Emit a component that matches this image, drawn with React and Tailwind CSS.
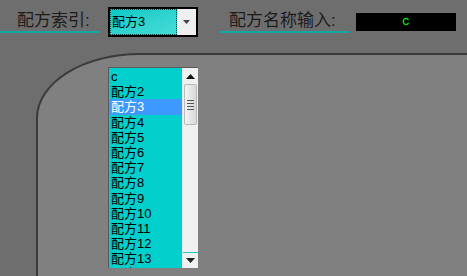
import React from "react";

const items = ["c", "配方2", "配方3", "配方4", "配方5", "配方6", "配方7", "配方8", "配方9", "配方10", "配方11", "配方12", "配方13", "配方14"];

const font = { fontFamily: '"Liberation Sans", "Noto Sans CJK SC", sans-serif' };

const UpArrow = () => (
  <svg width="9" height="5" viewBox="0 0 9 5"><path d="M0 5 L4.5 0 L9 5 Z" fill="#111" /></svg>
);
const DownArrow = ({ w = 9, h = 5, c = "#222" }) => (
  <svg width={w} height={h} viewBox={`0 0 ${w} ${h}`}><path d={`M0 0 L${w / 2} ${h} L${w} 0 Z`} fill={c} /></svg>
);

const DropList = () => (
  <div className="absolute left-[108px] top-[67px] w-[90px] h-[201px] flex border-l border-t border-[#5a5a5a] bg-[#00cfcc] overflow-hidden">
    <div className="flex-1 flex flex-col pt-[1px]">
      {items.map((it, i) => (
        <div
          key={it}
          className={`h-[15.2px] shrink-0 pl-[2px] text-[13px] leading-[15px] ${i === 2 ? "bg-[#3d98ff] text-white" : "text-black"}`}
        >
          {it}
        </div>
      ))}
    </div>
    <div className="w-[16px] bg-[#f0f0f0] flex flex-col border-l border-[#e6e6e6]">
      <div className="h-[16px] flex items-center justify-center"><UpArrow /></div>
      <div className="h-[41px] mx-[1px] rounded-[2px] border border-[#b9b9b9] bg-gradient-to-r from-[#f4f4f4] to-[#d8d8d8] flex flex-col items-center justify-center gap-[2px]">
        <div className="w-[7px] h-[1px] bg-[#555]" />
        <div className="w-[7px] h-[1px] bg-[#555]" />
        <div className="w-[7px] h-[1px] bg-[#555]" />
        <div className="w-[7px] h-[1px] bg-[#555]" />
      </div>
      <div className="flex-1" />
      <div className="h-[1px] bg-[#2ec4c4]" />
      <div className="h-[15px] flex items-center justify-center"><DownArrow /></div>
    </div>
  </div>
);

export default function App() {
  return (
    <div className="relative w-[467px] h-[276px] bg-[#6e6e6e] flex flex-col overflow-hidden" style={font}>
      <div className="h-[53px] flex items-start shrink-0">
        <div className="w-[100px] h-[33px] border-b-2 border-[#11a8a8] pl-[17px] pt-[10px] text-[17px] leading-[21px] text-[#1c1c1c] whitespace-nowrap">
          配方索引:
        </div>
        <div className="ml-[8px] mt-[7px] w-[90px] h-[30px] border-2 border-black flex">
          <div className="flex-1 bg-gradient-to-br from-[#00c9c6] to-[#45dcd6] border border-dotted border-[#0a4040] text-[13px] leading-[24px] pl-[1px] text-black">
            配方3
          </div>
          <div className="w-[19px] bg-[#efefef] flex items-center justify-center"><DownArrow w={7} h={4} c="#444" /></div>
        </div>
        <div className="ml-[22px] w-[129px] h-[33px] border-b-2 border-[#11a8a8] pl-[9px] pt-[10px] text-[17px] leading-[21px] text-[#1c1c1c] whitespace-nowrap">
          配方名称输入:
        </div>
        <div className="ml-[7px] mt-[13px] w-[100px] h-[18px] bg-black text-[#00ff00] text-[13px] leading-[18px] text-center" style={{ fontFamily: '"Liberation Mono", monospace' }}>
          c
        </div>
      </div>
      <div className="flex-1 ml-[36px] bg-[#808080] border-l-2 border-t-2 border-[#3a3a3a] rounded-tl-[104px_65px]" />
      <DropList />
    </div>
  );
}
